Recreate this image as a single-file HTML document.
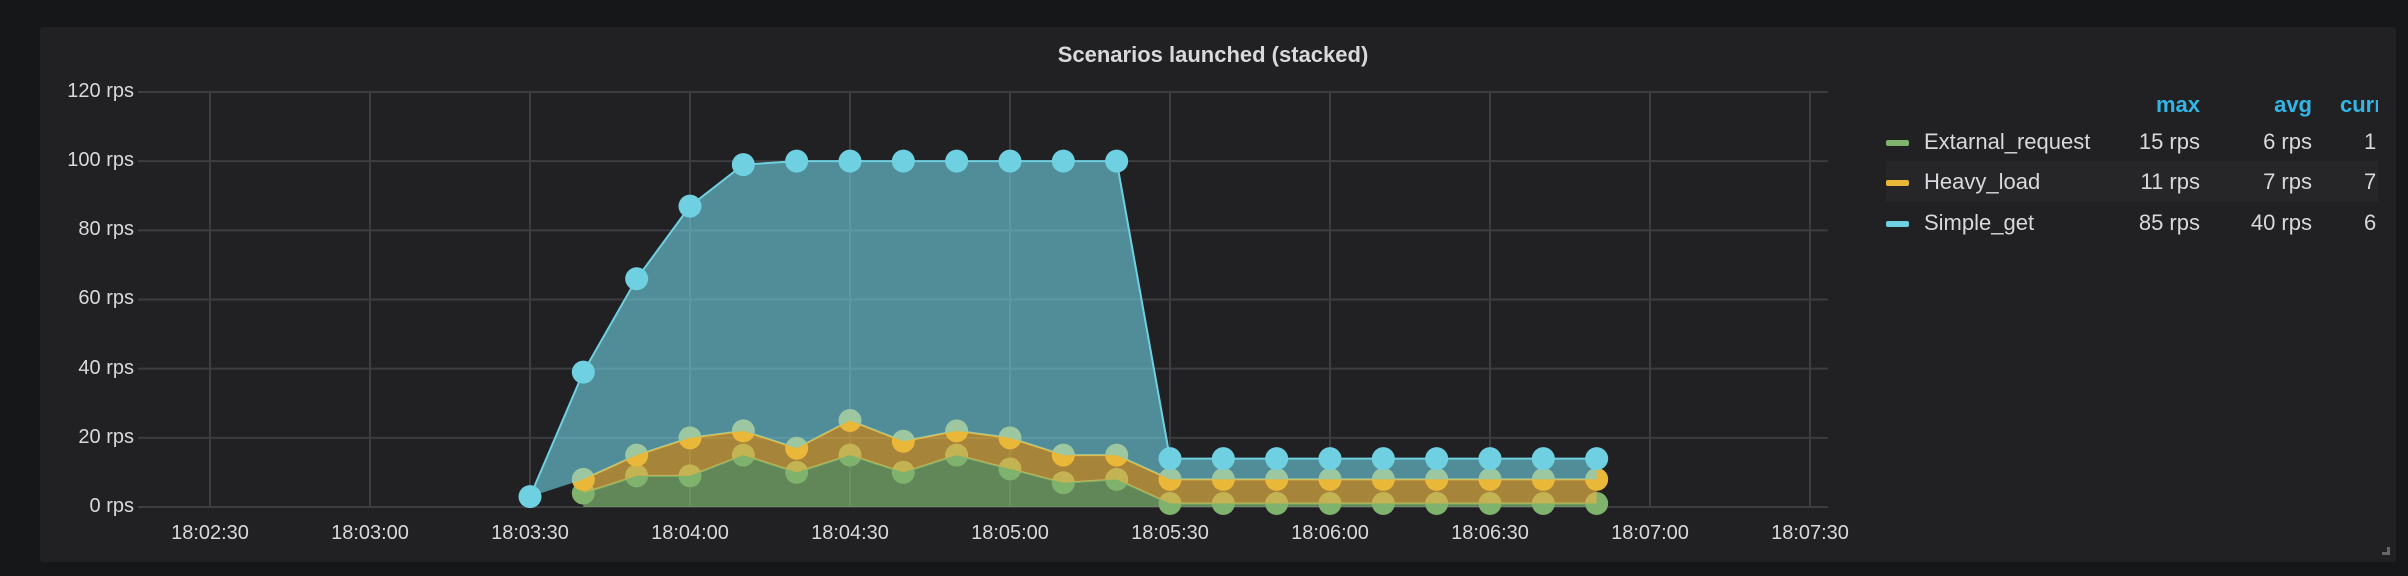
<!DOCTYPE html>
<html><head><meta charset="utf-8"><style>
html,body{margin:0;padding:0;background:#161719;width:2408px;height:576px;overflow:hidden;font-family:"Liberation Sans",sans-serif;}
#panel{position:absolute;left:40px;top:27px;width:2356px;height:535px;background:#212124;border-radius:3px;}
.t{position:absolute;color:#d8d9da;font-size:20px;white-space:nowrap;}
.yl{text-align:right;width:100px;left:34px;}
.xl{transform:translateX(-50%);}
.lg{position:absolute;font-size:22px;color:#d8d9da;white-space:nowrap;}
.sw{position:absolute;left:1886px;width:23px;height:6px;border-radius:2px;}
.r{text-align:right;}
</style></head><body>
<div id="panel"></div>
<div class="t" style="left:0;width:2426px;text-align:center;top:42px;font-size:22px;font-weight:bold;color:#d8d9da">Scenarios launched (stacked)</div>
<div class="t yl" style="top:80px">120 rps</div>
<div class="t yl" style="top:149px">100 rps</div>
<div class="t yl" style="top:218px">80 rps</div>
<div class="t yl" style="top:287px">60 rps</div>
<div class="t yl" style="top:357px">40 rps</div>
<div class="t yl" style="top:426px">20 rps</div>
<div class="t yl" style="top:495px">0 rps</div>
<div class="t xl" style="left:210px;top:522px">18:02:30</div>
<div class="t xl" style="left:370px;top:522px">18:03:00</div>
<div class="t xl" style="left:530px;top:522px">18:03:30</div>
<div class="t xl" style="left:690px;top:522px">18:04:00</div>
<div class="t xl" style="left:850px;top:522px">18:04:30</div>
<div class="t xl" style="left:1010px;top:522px">18:05:00</div>
<div class="t xl" style="left:1170px;top:522px">18:05:30</div>
<div class="t xl" style="left:1330px;top:522px">18:06:00</div>
<div class="t xl" style="left:1490px;top:522px">18:06:30</div>
<div class="t xl" style="left:1650px;top:522px">18:07:00</div>
<div class="t xl" style="left:1810px;top:522px">18:07:30</div>
<svg id="c" width="2408" height="576" style="position:absolute;left:0;top:0"></svg>
<div style="position:absolute;left:1886px;top:161px;width:492px;height:41px;background:#262629"></div>
<div class="lg" style="left:2100px;width:100px;top:92px;color:#33b5e5;font-weight:bold;text-align:right">max</div>
<div class="lg" style="left:2212px;width:100px;top:92px;color:#33b5e5;font-weight:bold;text-align:right">avg</div>
<div style="position:absolute;left:2340px;top:92px;width:38px;overflow:hidden"><div class="lg" style="position:static;color:#33b5e5;font-weight:bold">curr</div></div>
<div class="sw" style="top:140px;background:#7eb26d"></div>
<div class="sw" style="top:180px;background:#eab839"></div>
<div class="sw" style="top:221px;background:#6ed0e0"></div>
<div class="lg" style="left:1924px;top:129px">Extarnal_request</div>
<div class="lg" style="left:1924px;top:169px">Heavy_load</div>
<div class="lg" style="left:1924px;top:210px">Simple_get</div>
<div class="lg r" style="left:2100px;width:100px;top:129px">15 rps</div>
<div class="lg r" style="left:2100px;width:100px;top:169px">11 rps</div>
<div class="lg r" style="left:2100px;width:100px;top:210px">85 rps</div>
<div class="lg r" style="left:2212px;width:100px;top:129px">6 rps</div>
<div class="lg r" style="left:2212px;width:100px;top:169px">7 rps</div>
<div class="lg r" style="left:2212px;width:100px;top:210px">40 rps</div>
<div class="lg" style="left:2364px;top:129px">1</div>
<div class="lg" style="left:2364px;top:169px">7</div>
<div class="lg" style="left:2364px;top:210px">6</div>
<div style="position:absolute;left:2382px;top:547px;width:8px;height:8px;border-right:3px solid #666;border-bottom:3px solid #666;box-sizing:border-box"></div>
<script>
var s=document.getElementById('c'),h='';
function X(t){return 210+t*16/3;}function Y(v){return 507-v*415/120;}
for(var i=0;i<7;i++){var y=Y(i*20);h+='<line x1="138" x2="1828" y1="'+y+'" y2="'+y+'" stroke="#3d3d40" stroke-width="2"/>';}
for(var i=0;i<11;i++){var x=X(i*30);h+='<line x1="'+x+'" x2="'+x+'" y1="92" y2="507" stroke="#3d3d40" stroke-width="2"/>';}
var g=[4,9,9,15,10,15,10,15,11,7,8,1,1,1,1,1,1,1,1,1];
var yv=[8,15,20,22,17,25,19,22,20,15,15,8,8,8,8,8,8,8,8,8];
var b=[39,66,87,99,100,100,100,100,100,100,100,14,14,14,14,14,14,14,14,14];
function T(i){return 70+i*10;}
function area(top,bot,col,op){var p='';for(var i=0;i<top.length;i++)p+=(i?'L':'M')+X(T(i))+','+Y(top[i]);for(var i=bot.length-1;i>=0;i--)p+='L'+X(T(i))+','+Y(bot[i]);return '<path d="'+p+'Z" fill="'+col+'" fill-opacity="'+op+'"/>';}
function line(top,col){var p='';for(var i=0;i<top.length;i++)p+=(i?'L':'M')+X(T(i))+','+Y(top[i]);return '<path d="'+p+'" fill="none" stroke="'+col+'" stroke-width="2"/>';}
function pts(top,col,op){var r='';for(var i=0;i<top.length;i++)r+='<circle cx="'+X(T(i))+'" cy="'+Y(top[i])+'" r="11.5" fill="'+col+'" fill-opacity="'+op+'"/>';return r;}
var z=g.map(function(){return 0;});
h+=area(g,z,'#7eb26d',0.7)+line(g,'#7eb26d')+pts(g,'#7eb26d',1);
h+=area(yv,g,'#e6b445',0.68)+line(yv,'#eab839')+pts(yv,'#eab839',1);
var bp='M'+X(60)+','+Y(3);for(var i=0;i<b.length;i++)bp+='L'+X(T(i))+','+Y(b[i]);for(var i=yv.length-1;i>=0;i--)bp+='L'+X(T(i))+','+Y(yv[i]);
h+='<path d="'+bp+'Z" fill="#6ed0e0" fill-opacity="0.62"/>';
var bl='M'+X(60)+','+Y(3);for(var i=0;i<b.length;i++)bl+='L'+X(T(i))+','+Y(b[i]);
h+='<path d="'+bl+'" fill="none" stroke="#6ed0e0" stroke-width="2"/>';
h+='<circle cx="'+X(60)+'" cy="'+Y(3)+'" r="11.5" fill="#6ed0e0"/>'+pts(b,'#6ed0e0',1);
s.innerHTML=h;
</script>
</body></html>
